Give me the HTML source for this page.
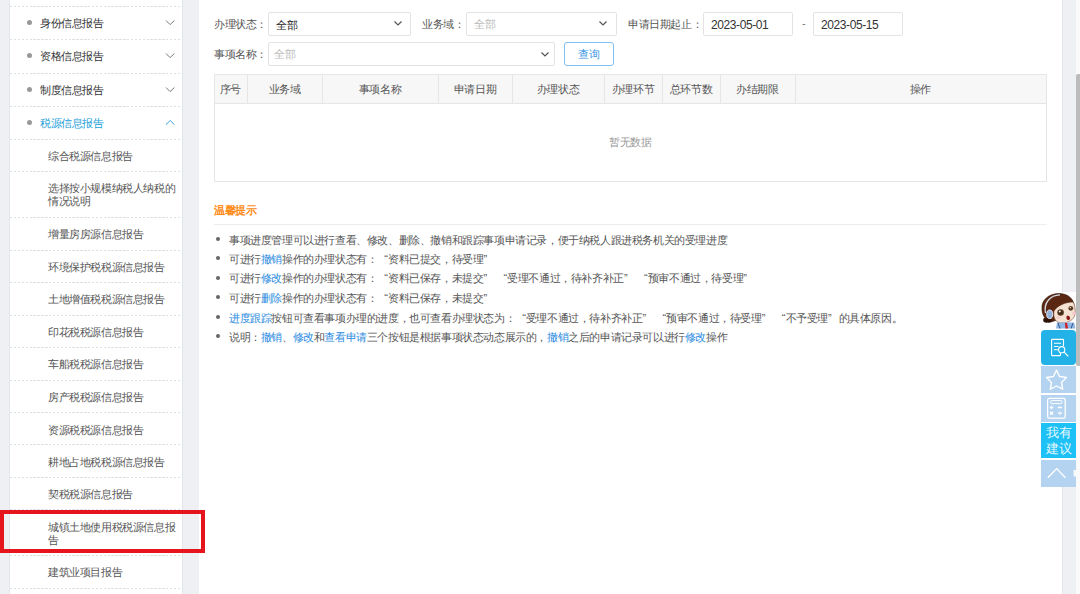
<!DOCTYPE html>
<html><head><meta charset="utf-8">
<style>
*{margin:0;padding:0;box-sizing:border-box}
html,body{width:1080px;height:594px;overflow:hidden;background:#eef0f3;font-family:"Liberation Sans",sans-serif;font-size:11px;letter-spacing:-0.4px;color:#333}
.abs{position:absolute}
#side{position:absolute;left:9px;top:0;width:174px;height:594px;background:#fff;border-left:1px solid #e2e5e9;border-right:1px solid #e2e5e9}
.sep{position:absolute;left:10px;width:171px;height:1px;background:repeating-linear-gradient(90deg,#dcdfe3 0 2.4px,transparent 2.4px 3.9px)}
.mi{position:absolute;left:40px;color:#333;line-height:14px;white-space:nowrap}
.mi.act{color:#22a0d8}
.dot{position:absolute;left:27px;width:5px;height:5px;border-radius:50%;background:#999}
.si{position:absolute;left:48px;color:#555;line-height:13px;white-space:nowrap}
.chev{position:absolute;left:165px;width:10px;height:7px}
#main{position:absolute;left:199px;top:0;width:864px;height:594px;background:#fff;border-right:1px solid #e2e5e9}
.lbl{position:absolute;color:#555;line-height:14px;white-space:nowrap}
.box{position:absolute;border:1px solid #e3e3e3;border-radius:2px;background:#fff}
.txt{position:absolute;line-height:14px;white-space:nowrap}
.th{position:absolute;top:75px;height:29px;line-height:29px;text-align:center;color:#555;white-space:nowrap}
.vl{position:absolute;top:75px;width:1px;height:29px;background:#e6e6e6}
.tip{position:absolute;left:229px;color:#555;line-height:14px;white-space:nowrap}
.tdot{position:absolute;left:216px;width:4px;height:4px;border-radius:50%;background:#666}
.b{color:#2a8be0}
i.ql,i.qr{font-style:normal;display:inline-block;width:10.6px;letter-spacing:0}
i.ql{text-align:right}
i.qr{text-align:left}
</style></head><body>
<div id="side"></div>
<div class="sep" style="top:6px"></div>
<div class="sep" style="top:39px"></div>
<div class="sep" style="top:73px"></div>
<div class="sep" style="top:106px"></div>
<div class="sep" style="top:139px"></div>
<div class="sep" style="top:171px"></div>
<div class="sep" style="top:217px"></div>
<div class="sep" style="top:250px"></div>
<div class="sep" style="top:282px"></div>
<div class="sep" style="top:315px"></div>
<div class="sep" style="top:347px"></div>
<div class="sep" style="top:380px"></div>
<div class="sep" style="top:412px"></div>
<div class="sep" style="top:444px"></div>
<div class="sep" style="top:477px"></div>
<div class="sep" style="top:509px"></div>
<div class="sep" style="top:555px"></div>
<div class="sep" style="top:588px"></div>
<div class="dot" style="top:19.5px"></div>
<div class="mi" style="top:15.5px">身份信息报告</div>
<svg class="chev" style="top:18.7px" viewBox="0 0 10 7"><polyline points="1,1.5 5.1,5.6 9.4,1.5" fill="none" stroke="#777" stroke-width="1"/></svg>
<div class="dot" style="top:53.0px"></div>
<div class="mi" style="top:49.0px">资格信息报告</div>
<svg class="chev" style="top:52.2px" viewBox="0 0 10 7"><polyline points="1,1.5 5.1,5.6 9.4,1.5" fill="none" stroke="#777" stroke-width="1"/></svg>
<div class="dot" style="top:86.5px"></div>
<div class="mi" style="top:82.5px">制度信息报告</div>
<svg class="chev" style="top:85.7px" viewBox="0 0 10 7"><polyline points="1,1.5 5.1,5.6 9.4,1.5" fill="none" stroke="#777" stroke-width="1"/></svg>
<div class="dot" style="top:119.5px"></div>
<div class="mi act" style="top:115.5px">税源信息报告</div>
<svg class="chev" style="top:118.5px" viewBox="0 0 10 7"><polyline points="1,5.6 5.3,1.4 9.3,5.6" fill="none" stroke="#3aa2d8" stroke-width="1"/></svg>
<div class="si" style="top:149.5px">综合税源信息报告</div>
<div class="si" style="top:182.0px">选择按小规模纳税人纳税的<br>情况说明</div>
<div class="si" style="top:228.0px">增量房房源信息报告</div>
<div class="si" style="top:260.5px">环境保护税税源信息报告</div>
<div class="si" style="top:293.0px">土地增值税税源信息报告</div>
<div class="si" style="top:325.5px">印花税税源信息报告</div>
<div class="si" style="top:358.0px">车船税税源信息报告</div>
<div class="si" style="top:391.0px">房产税税源信息报告</div>
<div class="si" style="top:423.5px">资源税税源信息报告</div>
<div class="si" style="top:455.5px">耕地占地税税源信息报告</div>
<div class="si" style="top:488.0px">契税税源信息报告</div>
<div class="si" style="top:520.5px">城镇土地使用税税源信息报<br>告</div>
<div class="si" style="top:566.0px">建筑业项目报告</div>
<div id="main"></div>
<div class="lbl" style="left:214px;top:17px">办理状态：</div>
<div class="box" style="left:268px;top:12px;width:143px;height:24px"></div>
<div class="txt" style="left:276px;top:18px;color:#222">全部</div>
<svg class="abs" style="left:392.5px;top:19.5px" width="10" height="7" viewBox="0 0 10 7"><polyline points="1.5,1.5 5,5 8.5,1.5" fill="none" stroke="#555" stroke-width="1.2"/></svg>
<div class="lbl" style="left:422px;top:17px">业务域：</div>
<div class="box" style="left:466px;top:12px;width:151px;height:24px"></div>
<div class="txt" style="left:474px;top:17px;color:#bbb">全部</div>
<svg class="abs" style="left:597.5px;top:19.5px" width="10" height="7" viewBox="0 0 10 7"><polyline points="1.5,1.5 5,5 8.5,1.5" fill="none" stroke="#555" stroke-width="1.2"/></svg>
<div class="lbl" style="left:628px;top:17px">申请日期起止：</div>
<div class="box" style="left:703px;top:12px;width:90px;height:24px"></div>
<div class="txt" style="left:711px;top:18px;color:#333;font-size:12px">2023-05-01</div>
<div class="txt" style="left:802px;top:16px;color:#777">-</div>
<div class="box" style="left:813px;top:12px;width:90px;height:24px"></div>
<div class="txt" style="left:821px;top:18px;color:#333;font-size:12px">2023-05-15</div>
<div class="lbl" style="left:214px;top:47px">事项名称：</div>
<div class="box" style="left:268px;top:42px;width:287px;height:24px"></div>
<div class="txt" style="left:274px;top:47px;color:#bbb">全部</div>
<svg class="abs" style="left:539.5px;top:50.5px" width="10" height="7" viewBox="0 0 10 7"><polyline points="1.5,1.5 5,5 8.5,1.5" fill="none" stroke="#555" stroke-width="1.2"/></svg>
<div class="abs" style="left:564px;top:42px;width:50px;height:24px;border:1px solid #80c0f2;border-radius:3px;background:#fff;color:#3a96e6;text-align:center;line-height:22px">查询</div>
<div class="abs" style="left:214px;top:74px;width:833px;height:108px;border:1px solid #e6e6e6;background:#fff"></div>
<div class="abs" style="left:215px;top:75px;width:831px;height:29px;background:#f7f7f7;border-bottom:1px solid #e6e6e6"></div>
<div class="th" style="left:214px;width:33px">序号</div>
<div class="th" style="left:247px;width:75px">业务域</div>
<div class="th" style="left:322px;width:116px">事项名称</div>
<div class="th" style="left:438px;width:74px">申请日期</div>
<div class="th" style="left:512px;width:92px">办理状态</div>
<div class="th" style="left:604px;width:58px">办理环节</div>
<div class="th" style="left:662px;width:58px">总环节数</div>
<div class="th" style="left:720px;width:75px">办结期限</div>
<div class="th" style="left:795px;width:251px">操作</div>
<div class="vl" style="left:247px"></div>
<div class="vl" style="left:322px"></div>
<div class="vl" style="left:438px"></div>
<div class="vl" style="left:512px"></div>
<div class="vl" style="left:604px"></div>
<div class="vl" style="left:662px"></div>
<div class="vl" style="left:720px"></div>
<div class="vl" style="left:795px"></div>
<div class="txt" style="left:609px;top:135px;color:#999">暂无数据</div>
<div class="txt" style="left:214px;top:203px;color:#ff8a14;font-weight:bold">温馨提示</div>
<div class="abs" style="left:214px;top:224px;width:833px;height:1px;background:#ededed"></div>
<div class="tdot" style="top:237.0px"></div>
<div class="tip" style="top:232.7px">事项进度管理可以进行查看、修改、删除、撤销和跟踪事项申请记录，便于纳税人跟进税务机关的受理进度</div>
<div class="tdot" style="top:256.1px"></div>
<div class="tip" style="top:251.8px">可进行<span class="b">撤销</span>操作的办理状态有：<i class="ql">“</i>资料已提交，待受理<i class="qr">”</i></div>
<div class="tdot" style="top:275.7px"></div>
<div class="tip" style="top:271.4px">可进行<span class="b">修改</span>操作的办理状态有：<i class="ql">“</i>资料已保存，未提交<i class="qr">”</i> <i class="ql">“</i>受理不通过，待补齐补正<i class="qr">”</i> <i class="ql">“</i>预审不通过，待受理<i class="qr">”</i></div>
<div class="tdot" style="top:295.2px"></div>
<div class="tip" style="top:290.9px">可进行<span class="b">删除</span>操作的办理状态有：<i class="ql">“</i>资料已保存，未提交<i class="qr">”</i></div>
<div class="tdot" style="top:314.9px"></div>
<div class="tip" style="top:310.6px"><span class="b">进度跟踪</span>按钮可查看事项办理的进度，也可查看办理状态为：<i class="ql">“</i>受理不通过，待补齐补正<i class="qr">”</i> <i class="ql">“</i>预审不通过，待受理<i class="qr">”</i> <i class="ql">“</i>不予受理<i class="qr">”</i>的具体原因。</div>
<div class="tdot" style="top:334.4px"></div>
<div class="tip" style="top:330.1px">说明：<span class="b">撤销</span>、<span class="b">修改</span>和<span class="b">查看申请</span>三个按钮是根据事项状态动态展示的，<span class="b">撤销</span>之后的申请记录可以进行<span class="b">修改</span>操作</div>
<div class="abs" style="left:1076px;top:0;width:4px;height:594px;background:#fafafa"></div>
<div class="abs" style="left:1076px;top:74px;width:4px;height:292px;background:#bcbcbc;border-radius:2px 0 0 2px"></div>
<svg class="abs" style="left:1040px;top:292px" width="36" height="38" viewBox="0 0 36 38">
<rect x="0" y="0" width="36" height="38" fill="#fff"/>
<path d="M2,17 C1,8 9,1.5 19,1.5 C28,1.5 34,7 34,14 L33,22 C29,22 22,24 17,28 L11,30 C5,28 2,23 2,17 Z" fill="#5a2812" stroke="#2a1208" stroke-width="0.6"/>
<path d="M4,26 C2,28.5 4,31.5 7.5,30.5 C10,31.5 12.5,29.5 11.5,27 Z" fill="#2e1208"/>
<path d="M14,19 C17,14 25,10 33,10 C35,13 36,19 34.5,24 C32.5,29 26,31.5 20,31 C15,30 13,25 14,19 Z" fill="#f6e2d2" stroke="#5a2812" stroke-width="0.5"/>
<path d="M5.5,21 C3.5,11 10,3 20,2.8" fill="none" stroke="#d8dce8" stroke-width="1.3"/>
<ellipse cx="9.7" cy="22.3" rx="3" ry="4.3" fill="#93b3db" stroke="#eef" stroke-width="0.9"/>
<circle cx="20.6" cy="20.5" r="3.3" fill="#5a3a22"/><circle cx="20.6" cy="20.8" r="1.8" fill="#3a2212"/><circle cx="19.8" cy="19.5" r="0.9" fill="#fff"/>
<circle cx="30.8" cy="16.3" r="2.4" fill="#5a3a22"/><circle cx="30.3" cy="15.6" r="0.7" fill="#fff"/>
<ellipse cx="18.5" cy="25.5" rx="2.4" ry="1.1" fill="#f7c6ca"/>
<ellipse cx="34" cy="21.5" rx="1.8" ry="1.4" fill="#f7c6ca"/>
<path d="M27.5,23.5 C30,24 31,26.5 29,28 C27,28.5 26,26.5 26.5,24.5 Z" fill="#8a1616"/>
<path d="M17,30.5 L34,30.5 L35.5,36.5 L16,36.5 Z" fill="#8db7e6"/>
<path d="M25,31 L27,31 L28,36.5 L25.5,36.5 Z" fill="#d41c1c"/>
<path d="M18,31 L20,36.5 M33,31 L31,36.5" stroke="#2d4c7c" stroke-width="0.9"/>
</svg>
<div class="abs" style="left:1040px;top:329px;width:36px;height:158px;background:#fff"></div>
<div class="abs" style="left:1041px;top:330px;width:35px;height:35px;background:#22b2e7;border-radius:4px"></div>
<svg class="abs" style="left:1041px;top:330px" width="35" height="35" viewBox="0 0 35 35">
<path d="M19.5,23 L19.5,25 Q19.5,25.6 18.9,25.6 L11.2,25.6 Q10.6,25.6 10.6,25 L10.6,10 Q10.6,9.4 11.2,9.4 L21.9,9.4 Q22.5,9.4 22.5,10 L22.5,16" fill="none" stroke="#fff" stroke-width="1.1"/>
<path d="M13,13.2 H20 M13,16.5 H17.5 M13,19.7 H17" stroke="#fff" stroke-width="1.1"/>
<circle cx="20.7" cy="19.7" r="3.1" fill="none" stroke="#fff" stroke-width="1.1"/>
<path d="M22.9,21.9 L27.3,26.3" stroke="#fff" stroke-width="1.2"/>
</svg>
<div class="abs" style="left:1041px;top:366px;width:35px;height:27px;background:#b3d3f0"></div>
<svg class="abs" style="left:1041px;top:366px" width="35" height="27" viewBox="0 0 35 27">
<path d="M15.5,4.2 L18.6,10.5 L25.5,11.5 L20.5,16.4 L21.7,23.2 L15.5,20 L9.3,23.2 L10.5,16.4 L5.5,11.5 L12.4,10.5 Z" fill="none" stroke="#fff" stroke-width="1.4" stroke-linejoin="round"/>
</svg>
<div class="abs" style="left:1041px;top:395px;width:35px;height:27px;background:#b3d3f0"></div>
<svg class="abs" style="left:1041px;top:395px" width="35" height="27" viewBox="0 0 35 27">
<rect x="6.6" y="3.4" width="17.6" height="19.8" rx="1.6" fill="none" stroke="#fff" stroke-width="1.3"/>
<rect x="9.6" y="5.6" width="11.4" height="3" rx="1.2" fill="none" stroke="#fff" stroke-width="1"/>
<path d="M8.7,12.5 H12.3 M10.5,10.7 V14.3 M16.8,12.5 H21 M8.9,16.6 L12.1,19.8 M12.1,16.6 L8.9,19.8 M16.8,18.2 H21" stroke="#fff" stroke-width="1.3"/>
<circle cx="18.9" cy="16.6" r="0.6" fill="#fff"/><circle cx="18.9" cy="19.8" r="0.6" fill="#fff"/>
</svg>
<div class="abs" style="left:1041px;top:423px;width:35px;height:35px;background:#1ec1f5;color:rgba(255,255,255,0.9);font-family:'Liberation Serif',serif;font-size:12.5px;letter-spacing:0;line-height:16.5px;text-align:center;padding-top:1.5px">我有<br>建议</div>
<div class="abs" style="left:1041px;top:460px;width:35px;height:27px;background:#b3d3f0"></div>
<svg class="abs" style="left:1041px;top:460px" width="35" height="27" viewBox="0 0 35 27">
<path d="M6.8,17.8 L15.7,8.6 L24.4,17.8" fill="none" stroke="#fff" stroke-width="1.3"/>
<rect x="32.5" y="10" width="2.5" height="6.5" fill="#fff" opacity="0.85"/>
</svg>
<div class="abs" style="left:0;top:510px;width:205px;height:43px;border:4px solid #e6141c"></div>
</body></html>
